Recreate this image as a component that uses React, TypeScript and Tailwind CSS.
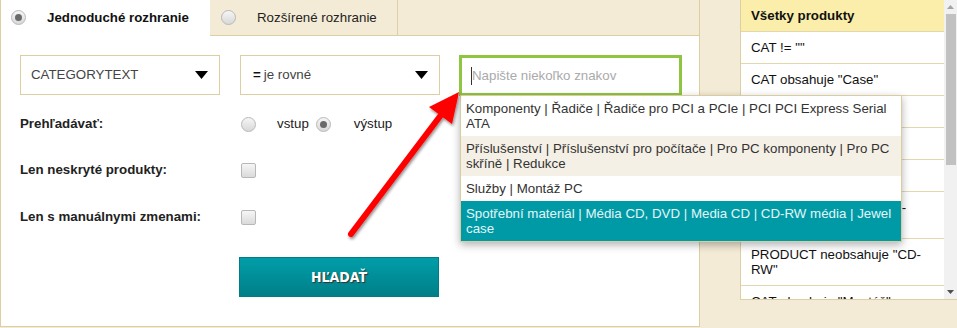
import React from 'react'

const suggestions = [
  'Komponenty | Řadiče | Řadiče pro PCI a PCIe | PCI PCI Express Serial ATA',
  'Příslušenství | Příslušenství pro počítače | Pro PC komponenty | Pro PC skříně | Redukce',
  'Služby | Montáž PC',
  'Spotřební materiál | Média CD, DVD | Media CD | CD-RW média | Jewel case',
]

const rules = [
  'CAT != ""',
  'CAT obsahuje "Case"',
  'CAT obsahuje "Radiče"',
  'CAT obsahuje "PCI"',
  'CAT obsahuje "Redukce"',
  'PRODUCT obsahuje "CD-ROM"',
  'PRODUCT neobsahuje "CD-RW"',
  'CAT obsahuje "Montáž"',
]

function Radio({ checked }: { checked?: boolean }) {
  return (
    <span className="flex h-[15px] w-[15px] shrink-0 items-center justify-center rounded-full border border-[#b8b8b8] bg-linear-to-b from-[#f6f6f6] to-[#d8d8d8]">
      {checked && <span className="h-[7px] w-[7px] rounded-full bg-[#6a6a6a]" />}
    </span>
  )
}

function Checkbox() {
  return (
    <span className="block h-[15px] w-[15px] rounded-[2px] border border-[#b8b8b8] bg-linear-to-b from-[#f6f6f6] to-[#dadada]" />
  )
}

function Caret() {
  return (
    <svg width="13" height="8" viewBox="0 0 13 8">
      <path d="M0 0h13L6.5 8z" fill="#000" />
    </svg>
  )
}

export default function App() {
  return (
    <div className="relative flex h-[328px] w-[957px] overflow-hidden bg-[#f4ebd6] font-['Liberation_Sans',Arial,sans-serif] text-[13.3px] text-[#222]">
      {/* left: tabs + form */}
      <div className="flex w-[700px] flex-col">
        <div className="flex h-[36px]">
          <div className="flex w-[210px] items-center gap-[21px] border-l border-[#dccfa3] bg-white pb-px pl-[10px]">
            <Radio checked />
            <span className="font-bold text-[#111]">Jednoduché rozhranie</span>
          </div>
          <div className="flex w-[188px] items-center gap-[21px] border-r border-b border-[#dccfa3] pl-[11px]">
            <Radio />
            <span className="text-[#222]">Rozšírené rozhranie</span>
          </div>
          <div className="flex-1 border-r border-b border-[#dccfa3]" />
        </div>

        <div className="h-[291px] border-r border-b border-l border-[#dccfa3] bg-white pt-[19px] pl-[19px]">
          <div className="flex items-start">
            <div className="flex h-[40px] w-[200px] items-center justify-between border border-[#dccfa3] pr-[11px] pl-[10px] text-[#444]">
              <span>CATEGORYTEXT</span>
              <Caret />
            </div>
            <div className="ml-[20px] flex h-[40px] w-[200px] items-center justify-between border border-[#dccfa3] pr-[11px] pl-[12px] text-[#444]">
              <span>
                <b className="mr-[3px] text-[#111]">=</b>je rovné
              </span>
              <Caret />
            </div>
            <div className="relative ml-[19px]">
              <div className="flex h-[41px] w-[223px] items-center border-[3px] border-[#8ec641] pl-[9px]">
                <span className="h-[18px] w-px bg-[#333]" />
                <span className="text-[#aaa]">Napište niekoľko znakov</span>
              </div>
              {/* autocomplete list */}
              <ul className="absolute top-[40px] left-px z-10 w-[442px] border border-[#d9cc9f] bg-white shadow-[0_3px_8px_rgba(0,0,0,0.3)]">
                {suggestions.map((s, i) => (
                  <li
                    key={i}
                    className={`py-[5px] pr-[8px] pl-[5px] leading-[15px] ${
                      i === 3 ? 'bg-[#009aa7] text-[#e3f6f7]' : i === 1 ? 'bg-[#f5f0e6] text-[#333]' : 'text-[#333]'
                    }`}
                  >
                    {s}
                  </li>
                ))}
              </ul>
            </div>
          </div>

          <div className="mt-[18px] flex h-[20px] items-center">
            <span className="w-[221px] font-bold">Prehľadávať:</span>
            <Radio />
            <span className="ml-[21px]">vstup</span>
            <span className="ml-[7px]">
              <Radio checked />
            </span>
            <span className="ml-[23px]">výstup</span>
          </div>

          <div className="mt-[26px] flex h-[20px] items-center">
            <span className="w-[221px] font-bold">Len neskryté produkty:</span>
            <Checkbox />
          </div>

          <div className="mt-[27px] flex h-[20px] items-center">
            <span className="w-[221px] font-bold">Len s manuálnymi zmenami:</span>
            <Checkbox />
          </div>

          <button className="mt-[30px] ml-[219px] flex h-[40px] w-[200px] items-center justify-center border border-[#017c85] bg-linear-to-b from-[#009ea9] to-[#007f88] font-['DejaVu_Sans_Condensed','DejaVu_Sans',sans-serif] text-[14px] font-bold text-white font-stretch-condensed [text-shadow:1px_1px_1px_#333]">
            HĽADAŤ
          </button>
        </div>
      </div>

      {/* right: rules list */}
      <div className="ml-[40px] flex h-[300px] w-[217px] border-b border-[#dccfa3]">
        <div className="w-[204px] overflow-hidden border-l border-[#dccfa3] bg-white text-[#111]">
          <div className="border-b border-[#e3d7ae] bg-[#faeeaa] px-[10px] py-[8px] leading-[15px] font-bold">Všetky produkty</div>
          {rules.map((r, i) => (
            <div key={i} className="border-b border-[#e3d7ae] py-[8px] pr-[12px] pl-[10px] leading-[15px]">
              {r}
            </div>
          ))}
        </div>
        <div className="flex w-[13px] flex-col items-center bg-[#f1f1f1]">
          <svg width="7" height="4" viewBox="0 0 7 4" className="mt-[5px]">
            <path d="M0 4h7L3.5 0z" fill="#a3a3a3" />
          </svg>
          <div className="mt-[5px] h-[151px] w-[10px] bg-[#c1c1c1]" />
          <div className="flex-1" />
          <svg width="7" height="4" viewBox="0 0 7 4" className="mb-[5px]">
            <path d="M0 0h7L3.5 4z" fill="#505050" />
          </svg>
        </div>
      </div>

      {/* red pointer arrow */}
      <svg className="pointer-events-none absolute top-0 left-0 z-20" width="957" height="328" viewBox="0 0 957 328">
        <defs>
          <filter id="sh" x="-20%" y="-20%" width="140%" height="140%">
            <feDropShadow dx="1" dy="2" stdDeviation="1.5" floodColor="#000" floodOpacity="0.45" />
          </filter>
        </defs>
        <g filter="url(#sh)">
          <line x1="351" y1="234" x2="444" y2="111" stroke="#ff0000" strokeWidth="6" strokeLinecap="round" />
          <path d="M459 92 L429 107 L452 124 Z" fill="#ff0000" />
        </g>
      </svg>
    </div>
  )
}
